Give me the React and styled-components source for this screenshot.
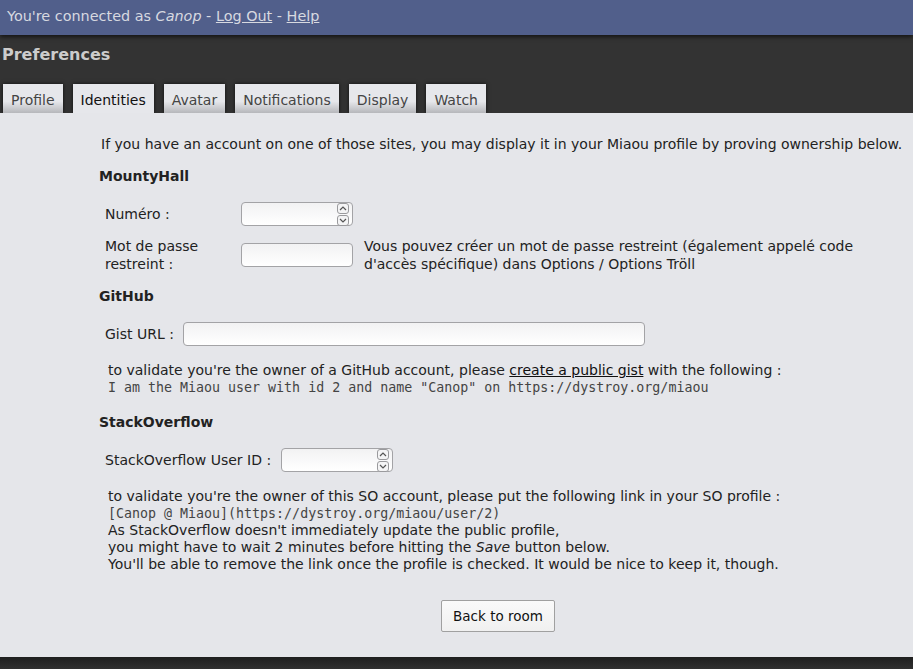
import React from 'react';
import styled, { createGlobalStyle } from 'styled-components';

const GlobalStyle = createGlobalStyle`
  html, body {
    margin: 0;
    padding: 0;
    height: 100%;
    background: #333;
  }
  body {
    font-family: 'DejaVu Sans', 'Liberation Sans', sans-serif;
    font-size: 14px;
    color: #222;
  }
`

const Page = styled.div`
  display: flex;
  flex-direction: column;
  height: 669px;
  overflow: hidden;
`

const TopBar = styled.div`
  background: #515f8b;
  color: #d7d9e0;
  height: 35px;
  display: flex;
  align-items: center;
  padding: 0 7px 4px;
  box-sizing: border-box;
  font-size: 14.4px;
  box-shadow: 0 2px 4px rgba(0, 0, 0, 0.6);
  position: relative;
  z-index: 1;
  a {
    color: #d7d9e0;
    text-decoration: underline;
  }
  em {
    font-style: italic;
  }
`

const Header = styled.div`
  background: #333;
  padding: 10px 2px 0;
  display: flex;
  flex-direction: column;
`

const Title = styled.h1`
  margin: 0;
  font-size: 16px;
  font-weight: bold;
  color: #ccc;
  height: 39px;
`

const Tabs = styled.div`
  display: flex;
  gap: 10px;
  padding-left: 1px;
`

const Tab = styled.div`
  height: 29px;
  padding: 3px 8px 0;
  display: flex;
  align-items: center;
  font-size: 14px;
  box-sizing: border-box;
  color: ${p => (p.$active ? '#111' : '#444')};
  background: ${p =>
    p.$active
      ? '#e6e7eb'
      : 'linear-gradient(to bottom, #e6e7eb 0%, #e6e7eb 60%, #b6b7bb 100%)'};
  box-shadow: 0 0 4px rgba(0, 0, 0, 0.7);
`

const Content = styled.div`
  flex: 1;
  background: #e5e6ea;
  padding: 23px 8px 0 99px;
  position: relative;
  z-index: 2;
`

const Intro = styled.p`
  margin: 0 0 15px 2px;
  line-height: 17px;
  white-space: nowrap;
`

const SiteTitle = styled.h3`
  margin: ${p => p.$top || 0}px 0 17px;
  font-size: 14px;
  font-weight: bold;
  line-height: 17px;
`

const FieldGrid = styled.div`
  display: grid;
  grid-template-columns: ${p => p.$labelWidth}px auto 1fr;
  align-items: center;
  row-gap: 11px;
  margin: 0 0 0 6px;
`

const Label = styled.div`
  line-height: 18px;
`

const InputBox = styled.div`
  width: ${p => p.$width}px;
  height: 24px;
  box-sizing: border-box;
  border: 1px solid #a3a3a6;
  border-radius: 4px;
  background: linear-gradient(to bottom, #f2f2f3, #ffffff);
  display: flex;
  justify-content: flex-end;
  align-items: center;
  padding-right: 3px;
`

const Spinner = styled.div`
  display: flex;
  flex-direction: column;
  gap: 1px;
`

const SpinBtn = styled.div`
  width: 10px;
  height: 9px;
  border: 1px solid #9a9a9d;
  border-radius: 3px;
  background: #f4f4f5;
  display: flex;
  align-items: center;
  justify-content: center;
  svg {
    display: block;
  }
`

const Hint = styled.div`
  margin-left: 11px;
  line-height: 18px;
`

const Notes = styled.div`
  margin: 16px 0 0 9px;
  line-height: 17px;
  a {
    color: #111;
    text-decoration: underline;
  }
`

const Code = styled.div`
  font-family: 'DejaVu Sans Mono', 'Liberation Mono', monospace;
  font-size: 13.3px;
  color: #444;
`

const Footer = styled.div`
  display: flex;
  justify-content: center;
  padding: 27px 0 0;
  margin-right: 8px;
`

const Button = styled.button`
  font-family: 'DejaVu Sans', sans-serif;
  font-size: 13.5px;
  color: #111;
  height: 32px;
  padding: 0 11px;
  border: 1px solid #a0a0a0;
  border-radius: 2px;
  background: linear-gradient(to bottom, #fafafa, #f0f0f0);
`

const BottomBar = styled.div`
  height: 12px;
  background: linear-gradient(to bottom, #1f1f1f, #303030);
`

function Arrow({ up }) {
  return (
    <svg width="8" height="5" viewBox="0 0 8 5">
      <path
        d={up ? 'M1 4 L4 1 L7 4' : 'M1 1 L4 4 L7 1'}
        fill="none"
        stroke="#555"
        strokeWidth="1.2"
      />
    </svg>
  );
}

function NumberInput({ width }) {
  return (
    <InputBox $width={width}>
      <Spinner>
        <SpinBtn><Arrow up /></SpinBtn>
        <SpinBtn><Arrow /></SpinBtn>
      </Spinner>
    </InputBox>
  );
}

const tabs = ['Profile', 'Identities', 'Avatar', 'Notifications', 'Display', 'Watch'];

export default function App() {
  return (
    <Page>
      <GlobalStyle />
      <TopBar>
        <span>
          You're connected as <em>Canop</em> - <a href="#">Log Out</a> - <a href="#">Help</a>
        </span>
      </TopBar>
      <Header>
        <Title>Preferences</Title>
        <Tabs>
          {tabs.map(t => (
            <Tab key={t} $active={t === 'Identities'}>{t}</Tab>
          ))}
        </Tabs>
      </Header>
      <Content>
        <Intro>
          If you have an account on one of those sites, you may display it in your Miaou profile by proving ownership below.
        </Intro>

        <SiteTitle>MountyHall</SiteTitle>
        <FieldGrid $labelWidth={136}>
          <Label>Numéro :</Label>
          <NumberInput width={112} />
          <span />
          <Label>Mot de passe<br />restreint :</Label>
          <InputBox $width={112} />
          <Hint>
            Vous pouvez créer un mot de passe restreint (également appelé code<br />
            d'accès spécifique) dans Options / Options Tröll
          </Hint>
        </FieldGrid>

        <SiteTitle $top={15}>GitHub</SiteTitle>
        <FieldGrid $labelWidth={78}>
          <Label>Gist URL :</Label>
          <InputBox $width={462} />
          <span />
        </FieldGrid>
        <Notes>
          to validate you're the owner of a GitHub account, please <a href="#">create a public gist</a> with the following :
          <Code>I am the Miaou user with id 2 and name "Canop" on https://dystroy.org/miaou</Code>
        </Notes>

        <SiteTitle $top={18}>StackOverflow</SiteTitle>
        <FieldGrid $labelWidth={176}>
          <Label>StackOverflow User ID :</Label>
          <NumberInput width={112} />
          <span />
        </FieldGrid>
        <Notes>
          to validate you're the owner of this SO account, please put the following link in your SO profile :
          <Code>[Canop @ Miaou](https://dystroy.org/miaou/user/2)</Code>
          As StackOverflow doesn't immediately update the public profile,<br />
          you might have to wait 2 minutes before hitting the <em>Save</em> button below.<br />
          You'll be able to remove the link once the profile is checked. It would be nice to keep it, though.
        </Notes>

        <Footer>
          <Button>Back to room</Button>
        </Footer>
      </Content>
      <BottomBar />
    </Page>
  );
}
